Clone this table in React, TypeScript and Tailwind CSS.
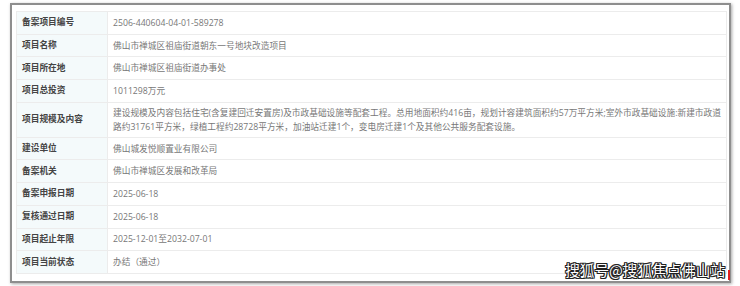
import React from 'react';

const rows: { label: string; value: React.ReactNode; tall?: boolean }[] = [
  { label: '备案项目编号', value: '2506-440604-04-01-589278' },
  { label: '项目名称', value: '佛山市禅城区祖庙街道朝东一号地块改造项目' },
  { label: '项目所在地', value: '佛山市禅城区祖庙街道办事处' },
  { label: '项目总投资', value: '1011298万元' },
  {
    label: '项目规模及内容',
    tall: true,
    value: (
      <>
        建设规模及内容包括住宅(含复建回迁安置房)及市政基础设施等配套工程。总用地面积约416亩，规划计容建筑面积约57万平方米;室外市政基础设施:新建市政道
        <br />
        路约31761平方米，绿植工程约28728平方米，加油站迁建1个，变电房迁建1个及其他公共服务配套设施。
      </>
    ),
  },
  { label: '建设单位', value: '佛山城发悦顺置业有限公司' },
  { label: '备案机关', value: '佛山市禅城区发展和改革局' },
  { label: '备案申报日期', value: '2025-06-18' },
  { label: '复核通过日期', value: '2025-06-18' },
  { label: '项目起止年限', value: '2025-12-01至2032-07-01' },
  { label: '项目当前状态', value: '办结（通过）' },
];

export default function App() {
  return (
    <div
      className="w-[740px] h-[286px] bg-white pt-[3px] pl-[10px]"
      style={{ fontFamily: '"Open Sans", "Noto Sans CJK SC", sans-serif' }}
    >
      <div className="relative w-[721px] h-[280px] bg-white border-2 border-[#8e8e8e] shadow-[1px_1px_3px_rgba(0,0,0,0.35)] pt-[6px] pl-[4px]">
        <div className="w-[711px] border-t border-l border-r border-[#ececec]">
          {rows.map((r) => (
            <div
              key={r.label}
              className={`flex border-b border-[#ececec] ${r.tall ? 'h-[35px]' : 'h-[22.7px]'}`}
            >
              <div className="w-[91px] shrink-0 bg-[#f4fafb] border-r border-[#ececec] pl-[5px] flex items-center text-[8.7px] font-bold text-[#444]">
                {r.label}
              </div>
              <div className="flex-1 pl-[5px] flex items-center text-[8.7px] leading-[14px] text-[#777] whitespace-nowrap">
                <div>{r.value}</div>
              </div>
            </div>
          ))}
        </div>
        <div
          className="absolute right-[4px] bottom-[1px] text-[14.6px] leading-[20px] text-white tracking-[0px]"
          style={{
            fontFamily: '"Noto Sans CJK SC", sans-serif',
            textShadow:
              '1px 0 0 #222, -1px 0 0 #222, 0 1px 0 #222, 0 -1px 0 #222, 1px 1px 0 #222, -1px -1px 0 #222, 1px -1px 0 #222, -1px 1px 0 #222',
          }}
        >
          搜狐号@搜狐焦点佛山站
        </div>
        <div className="absolute right-[-1px] bottom-[1px] w-[2px] h-[10px] bg-[#e02020]" />
      </div>
    </div>
  );
}
